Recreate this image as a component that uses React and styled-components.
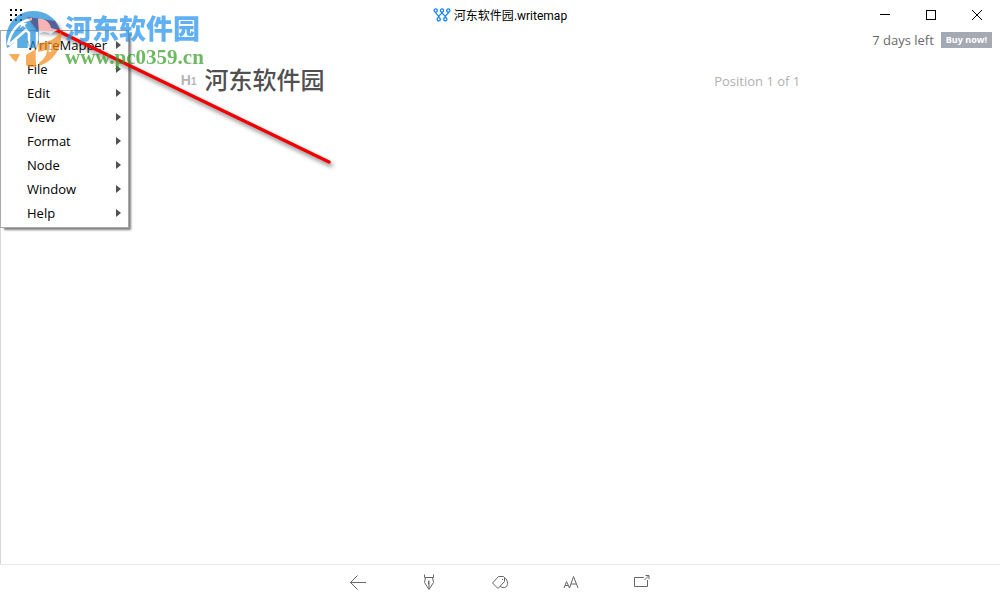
import React from "react";
import styled, { createGlobalStyle } from "styled-components";

const GlobalStyle = createGlobalStyle`
  *, *::before, *::after { box-sizing: border-box; }
  body {
    margin: 0;
    background: #fff;
    color: #000;
    font-family: "Open Sans", "Noto Sans CJK SC", sans-serif;
  }
  button {
    font: inherit;
    color: inherit;
    border: 0;
    padding: 0;
    background: none;
    cursor: pointer;
  }
  svg { display: block; }
`;

const Page = styled.div`
  position: relative;
  display: flex;
  flex-direction: column;
  min-height: 100vh;
`;

const TitleBar = styled.header`
  display: grid;
  grid-template-columns: 1fr auto 1fr;
  align-items: center;
  height: 30px;
`;

const AppButton = styled.button`
  display: flex;
  align-items: center;
  width: 32px;
  height: 30px;
  padding-left: 10px;
`;

const Title = styled.h1`
  display: flex;
  align-items: center;
  gap: 3px;
  margin: 0;
  font-family: "Roboto", "Noto Sans CJK SC", sans-serif;
  font-size: 12px;
  line-height: 20px;
  font-weight: 400;
`;

const FileName = styled.span`
  font-family: "Noto Sans CJK SC", sans-serif;
`;

const WindowControls = styled.div`
  display: flex;
  justify-content: flex-end;
`;

const ControlButton = styled.button`
  display: grid;
  place-items: center;
  width: 46px;
  height: 28px;
`;

const Workspace = styled.main`
  flex: 1;
  border-left: 1px solid #d8d8d8;
`;

const Trial = styled.div`
  display: flex;
  justify-content: flex-end;
  align-items: center;
  gap: 7px;
  height: 20px;
  padding-right: 8px;
  font-size: 13px;
  line-height: 18px;
  color: #6a6a6a;
`;

const BuyButton = styled.button`
  height: 16px;
  padding: 0 5px;
  background: #a5a9b4;
  color: #fff;
  font-size: 9px;
  line-height: 16px;
  font-weight: 700;
`;

const NodeRow = styled.section`
  display: flex;
  align-items: center;
  gap: 8px;
  padding: 12px 20% 0 18%;
`;

const Level = styled.span`
  color: #b4b4b8;
  font-family: "Liberation Sans", sans-serif;
  font-size: 14px;
  font-weight: 700;
  line-height: 36px;

  small { font-size: 10px; }
`;

const NodeTitle = styled.h2`
  flex: 1;
  margin: 0;
  color: #505050;
  font-family: "Liberation Serif", "Noto Sans CJK SC", serif;
  font-size: 24px;
  line-height: 36px;
  font-weight: 500;
`;

const Position = styled.span`
  color: #b0b0b0;
  font-size: 13px;
  line-height: 36px;
`;

const Toolbar = styled.footer`
  display: flex;
  justify-content: center;
  height: 36px;
  border-top: 1px solid #e8e8e8;
`;

const ToolButton = styled.button`
  display: grid;
  place-items: center;
  width: 71px;
  height: 34px;
  color: #66666c;
`;

const Menu = styled.nav`
  position: absolute;
  top: 30px;
  left: 0;
  width: 129px;
  padding: 2px 0;
  border: 1px solid #a8a8a8;
  background: #fff;
  box-shadow: 3px 3px 2px -1px rgba(0, 0, 0, 0.5);
`;

const MenuItem = styled.button`
  display: flex;
  align-items: center;
  justify-content: space-between;
  width: 100%;
  height: 24px;
  padding: 0 7px 0 26px;
  font-size: 13px;
  line-height: 24px;
`;

const Pointer = styled.svg`
  position: absolute;
  top: 0;
  left: 0;
  pointer-events: none;
  filter: drop-shadow(2px 3px 2px rgba(0, 0, 0, 0.5));
`;

const Watermark = styled.div`
  position: absolute;
  top: 10px;
  left: 4px;
  display: flex;
  gap: 3px;
  opacity: 0.7;
  pointer-events: none;
`;

const WatermarkText = styled.div`
  display: flex;
  flex-direction: column;
  font-weight: 700;
  white-space: nowrap;
`;

const WatermarkName = styled.span`
  color: #1e90ee;
  font-family: "Noto Sans CJK SC", sans-serif;
  font-size: 27px;
  font-weight: 900;
  line-height: 36px;
`;

const WatermarkSite = styled.span`
  color: #2f9c20;
  font-family: "Liberation Serif", serif;
  font-size: 21px;
  line-height: 22px;
`;

const menuItems = ["WriteMapper", "File", "Edit", "View", "Format", "Node", "Window", "Help"];

const Stroke = ({ width = 18, height = 18, children, ...rest }) => (
  <svg width={width} height={height} viewBox={`0 0 ${width} ${height}`} fill="none" stroke="currentColor" aria-hidden="true" {...rest}>
    {children}
  </svg>
);

const tools = [
  { label: "Back", icon: <Stroke><path d="M17 9.5H1.5M8.5 2.5L1.5 9.5L8.5 16.5" /></Stroke> },
  {
    label: "Write",
    icon: (
      <Stroke>
        <path d="M4.5 1.5V4.5H13.5V1.500M5.500 4.500L4.500 9.500L9 16.500L13.500 9.500L12.500 4.500M9 16V7.500" />
        <path d="M8.500 8V11.500" />
      </Stroke>
    ),
  },
  {
    label: "Tags",
    icon: (
      <Stroke>
        <path d="M1.5 10L7.5 3.5H12.5L13.5 4.5V8.5L7 15.5Z" />
        <path d="M13.5 4.5C17.5 7 17.5 14 13.5 14.5C11.5 15 10 14 9 13M11.5 6V7" />
      </Stroke>
    ),
  },
  {
    label: "Text size",
    icon: (
      <Stroke>
        <path d="M2 15L4.5 8.5L7.5 15M3 12.5H6.5M7.5 15L11.5 3.5L16 15M9 11H14.5" />
      </Stroke>
    ),
  },
  {
    label: "Export",
    icon: (
      <Stroke>
        <path d="M11 4.5H1.5V13.5H14.5V7M11.5 7L15.5 3M12.5 2.5H16V6" />
      </Stroke>
    ),
  },
];

function MapLogo() {
  return (
    <Stroke width={18} height={14} color="#1683fb" strokeWidth="1.3">
      <circle cx="2.7" cy="2.5" r="1.6" />
      <circle cx="9" cy="2.5" r="1.6" />
      <circle cx="15.3" cy="2.5" r="1.6" />
      <circle cx="5.7" cy="11.3" r="1.6" />
      <circle cx="12.3" cy="11.3" r="1.6" />
      <path d="M2.7 4C2.7 7.5 5.7 5.5 5.7 9.7C5.7 5.5 9 7.5 9 4C9 7.5 12.3 5.5 12.3 9.7C12.3 5.5 15.3 7.5 15.3 4" />
    </Stroke>
  );
}

function AppGrid() {
  return (
    <svg width="12" height="12" viewBox="0 0 12 12" aria-hidden="true">
      {[0, 5, 10].map((y) => [0, 5, 10].map((x) => <rect key={`${x}-${y}`} x={x} y={y} width="2" height="2" />))}
    </svg>
  );
}

function WatermarkLogo() {
  return (
    <svg width="58" height="58" viewBox="0 0 58 58" aria-hidden="true">
      <path fill="#1689d6" d="M3 38C-2 17 12 1 29 1C42 1 52 8 56 19C52 20 49 22 47 25C44 22 39 22 35 24V34C33 36 31 37 29 38H12V31L5 37Z" />
      <path fill="#fff" d="M34 9C40 8 46 12 47 18L54 20C51 21 49 22 47 25C44 22 39 22 35 24Z" />
      <path fill="none" stroke="#fff" strokeWidth="2.5" d="M4 35C6 22 14 11 28 9" />
      <path fill="none" stroke="#fff" strokeWidth="2.5" d="M5 35L22 20L25 23V38M12 30V38" />
      <path fill="#fff" d="M19 11L20 13L23 13L21 15L22 18L19 16L16 18L17 15L14 13L18 13Z" />
      <path fill="#f28a16" d="M5 44H16L12 52C9 50 7 47 5 44ZM22 45L32 39V57C28 57 25 57 22 55ZM34 33C44 33 51 29 57 22C59 37 50 51 35 56V53C40 49 43 45 43 40L34 42Z" />
      <path fill="none" stroke="#fff" strokeWidth="2.5" d="M33 22V50M46 34V42" />
    </svg>
  );
}

export default function App() {
  return (
    <>
      <GlobalStyle />
      <Page>
        <TitleBar>
          <AppButton aria-label="Application menu"><AppGrid /></AppButton>
          <Title><MapLogo /><span><FileName>河东软件园</FileName>.writemap</span></Title>
          <WindowControls>
            <ControlButton aria-label="Minimize">
              <Stroke width={10} height={10}><path d="M0 4.5H10" /></Stroke>
            </ControlButton>
            <ControlButton aria-label="Maximize">
              <Stroke width={10} height={10}><rect x="0.5" y="0.5" width="9" height="9" /></Stroke>
            </ControlButton>
            <ControlButton aria-label="Close">
              <Stroke width={10} height={10}><path d="M0 0L10 10M10 0L0 10" /></Stroke>
            </ControlButton>
          </WindowControls>
        </TitleBar>

        <Workspace>
          <Trial>
            <span>7 days left</span>
            <BuyButton>Buy now!</BuyButton>
          </Trial>
          <NodeRow>
            <Level>H<small>1</small></Level>
            <NodeTitle>河东软件园</NodeTitle>
            <Position>Position 1 of 1</Position>
          </NodeRow>
        </Workspace>

        <Toolbar>
          {tools.map(({ label, icon }) => (
            <ToolButton key={label} aria-label={label}>{icon}</ToolButton>
          ))}
        </Toolbar>

        <Menu aria-label="Application">
          {menuItems.map((item) => (
            <MenuItem key={item}>
              {item}
              <svg width="5" height="8" viewBox="0 0 5 8" fill="#505050" aria-hidden="true"><path d="M0 0L5 4L0 8Z" /></svg>
            </MenuItem>
          ))}
        </Menu>

        <Pointer width="340" height="180" viewBox="0 0 340 180" aria-hidden="true">
          <path d="M58 31L329 162" stroke="#f00000" strokeWidth="3.4" strokeLinecap="round" />
          <path d="M27 17L55 21L61 32L37 30Z" fill="#f00000" />
        </Pointer>

        <Watermark>
          <WatermarkLogo />
          <WatermarkText>
            <WatermarkName>河东软件园</WatermarkName>
            <WatermarkSite>www.pc0359.cn</WatermarkSite>
          </WatermarkText>
        </Watermark>
      </Page>
    </>
  );
}
